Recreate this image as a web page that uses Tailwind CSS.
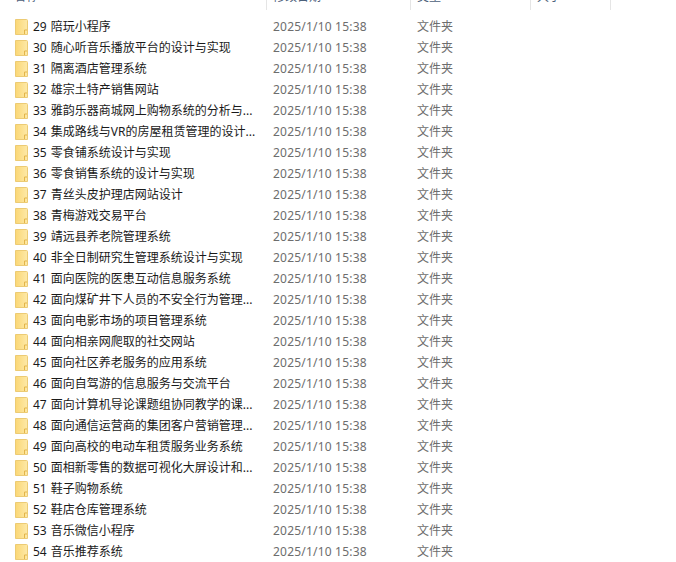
<!DOCTYPE html>
<html lang="zh-CN">
<head>
  <meta charset="UTF-8" />
  <title>文件夹</title>
  <script src="https://cdn.jsdelivr.net/npm/@tailwindcss/browser@4"></script>
</head>
<body class="bg-white overflow-hidden font-['Noto_Sans','Noto_Sans_CJK_SC',sans-serif] text-[12px]">
  <!-- header, cut off by the top of the window -->
  <div class="flex h-[10px] overflow-hidden text-[#4c607a]">
    <div class="w-[267px] border-r border-[#e5e5e5] pl-[14px] mt-[-11px] leading-[16px]">名称</div>
    <div class="w-[144px] border-r border-[#e5e5e5] pl-[6px] mt-[-11px] leading-[16px]">修改日期</div>
    <div class="w-[120px] border-r border-[#e5e5e5] pl-[6px] mt-[-11px] leading-[16px]">类型</div>
    <div class="w-[80px] border-r border-[#e5e5e5] pl-[6px] mt-[-11px] leading-[16px]">大小</div>
  </div>
  <div id="list" class="pt-[6px]"></div>
  <template id="row">
    <div class="flex items-center h-[21px] leading-[21px]">
      <div class="w-[33px] pl-[15px] shrink-0">
        <svg width="13" height="16" viewBox="0 0 13 16">
          <defs>
            <linearGradient id="fold" x1="0" x2="1" y1="0" y2="0">
              <stop offset="0" stop-color="#fbd775" />
              <stop offset="1" stop-color="#fde9a8" />
            </linearGradient>
          </defs>
          <path d="M0.5 0.5H11.5Q12.5 0.5 12.5 1.5V15.5H0.5Z" fill="url(#fold)" stroke="#eccb74"/>
          <path d="M9.5 15V11H12" fill="none" stroke="#e3b54a"/>
        </svg>
      </div>
      <div class="name w-[240px] shrink-0 text-[#1a1a1a] whitespace-nowrap [word-spacing:1px]"></div>
      <div class="w-[144px] shrink-0 text-[#6d6d6d] tracking-[0.2px]">2025/1/10 15:38</div>
      <div class="text-[#6d6d6d]">文件夹</div>
    </div>
  </template>
  <script>
    const names = [
      '29 陪玩小程序', '30 随心听音乐播放平台的设计与实现', '31 隔离酒店管理系统', '32 雄宗土特产销售网站',
      '33 雅韵乐器商城网上购物系统的分析与...', '34 集成路线与VR的房屋租赁管理的设计...', '35 零食铺系统设计与实现',
      '36 零食销售系统的设计与实现', '37 青丝头皮护理店网站设计', '38 青梅游戏交易平台', '39 靖远县养老院管理系统',
      '40 非全日制研究生管理系统设计与实现', '41 面向医院的医患互动信息服务系统', '42 面向煤矿井下人员的不安全行为管理...',
      '43 面向电影市场的项目管理系统', '44 面向相亲网爬取的社交网站', '45 面向社区养老服务的应用系统',
      '46 面向自驾游的信息服务与交流平台', '47 面向计算机导论课题组协同教学的课...', '48 面向通信运营商的集团客户营销管理...',
      '49 面向高校的电动车租赁服务业务系统', '50 面相新零售的数据可视化大屏设计和...', '51 鞋子购物系统',
      '52 鞋店仓库管理系统', '53 音乐微信小程序', '54 音乐推荐系统'
    ];
    const list = document.getElementById('list');
    const tpl = document.getElementById('row');
    names.forEach(n => {
      const r = tpl.content.cloneNode(true);
      r.querySelector('.name').textContent = n;
      list.appendChild(r);
    });
  </script>
</body>
</html>
